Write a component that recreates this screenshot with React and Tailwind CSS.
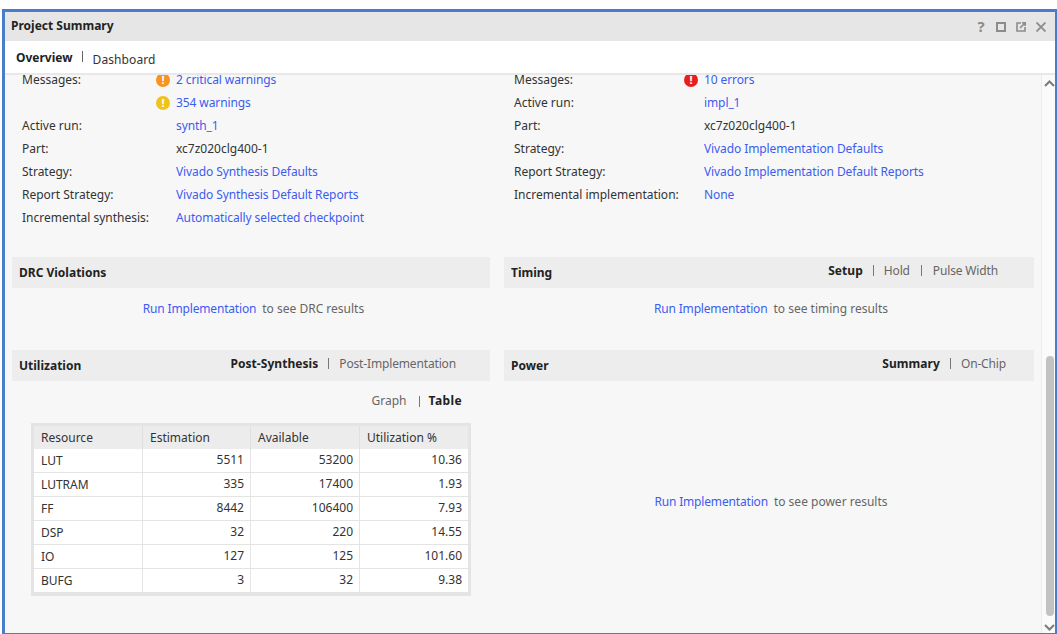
const leftRows = [
  { label: 'Messages:', value: '2 critical warnings', icon: 'orange', link: true },
  { label: '', value: '354 warnings', icon: 'yellow', link: true },
  { label: 'Active run:', value: 'synth_1', link: true },
  { label: 'Part:', value: 'xc7z020clg400-1' },
  { label: 'Strategy:', value: 'Vivado Synthesis Defaults', link: true },
  { label: 'Report Strategy:', value: 'Vivado Synthesis Default Reports', link: true },
  { label: 'Incremental synthesis:', value: 'Automatically selected checkpoint', link: true },
];

const rightRows = [
  { label: 'Messages:', value: '10 errors', icon: 'red', link: true },
  { label: 'Active run:', value: 'impl_1', link: true },
  { label: 'Part:', value: 'xc7z020clg400-1' },
  { label: 'Strategy:', value: 'Vivado Implementation Defaults', link: true },
  { label: 'Report Strategy:', value: 'Vivado Implementation Default Reports', link: true },
  { label: 'Incremental implementation:', value: 'None', link: true },
];

const resources = [
  ['LUT', '5511', '53200', '10.36'],
  ['LUTRAM', '335', '17400', '1.93'],
  ['FF', '8442', '106400', '7.93'],
  ['DSP', '32', '220', '14.55'],
  ['IO', '127', '125', '101.60'],
  ['BUFG', '3', '32', '9.38'],
];

function Badge({ color }) {
  const bg = color === 'orange' ? 'bg-[#f7931e]' : color === 'yellow' ? 'bg-[#eec41a]' : 'bg-[#e8201c]';
  return (
    <span className={`flex h-[14px] w-[14px] items-center justify-center rounded-full text-[11px] leading-none font-bold text-white ${bg}`}>
      !
    </span>
  );
}

function InfoRows({ rows, labelWidth }) {
  return (
    <div className="pl-[10px]">
      {rows.map((row, i) => (
        <div key={i} className="flex h-[23px] items-center">
          <span className={`shrink-0 whitespace-nowrap text-[#333] ${labelWidth}`}>{row.label}</span>
          <span className="flex w-[20px] shrink-0">{row.icon && <Badge color={row.icon} />}</span>
          <span className={`whitespace-nowrap ${row.link ? 'tracking-[-0.1px] text-[#3c5cf0]' : 'text-[#333]'}`}>{row.value}</span>
        </div>
      ))}
    </div>
  );
}

function SectionBar({ title, tabs, pad }) {
  return (
    <div className="flex h-[31px] items-center justify-between bg-[#ededed] pl-[7px]">
      <span className="mt-[1px] font-bold text-[#222]">{title}</span>
      {tabs && (
        <div className={`mb-[4px] flex items-center ${pad}`}>
          {tabs.map((t, i) => (
            <span key={t} className="flex items-center">
              {i > 0 && <span className={`h-[11px] w-px bg-[#777] ${i === 1 ? 'mx-[10px]' : 'mx-[11px]'}`} />}
              <span className={i === 0 ? 'tracking-[0.05px] font-bold text-[#222]' : 'tracking-[-0.15px] text-[#666]'}>{t}</span>
            </span>
          ))}
        </div>
      )}
    </div>
  );
}

function RunHint({ what }) {
  return (
    <>
      <span className="tracking-[-0.17px] text-[#3c5cf0]">Run Implementation</span>
      <span className="ml-[6px] text-[#666]">to see {what} results</span>
    </>
  );
}

function ResourceTable() {
  return (
    <div className="ml-[19px] mt-[13px] w-[440px] border-x-[3px] border-b-[4px] border-t-[3px] border-[#e4e4e4] bg-white">
      <div className="grid h-[23px] grid-cols-[108px_108px_109px_109px] items-center bg-[#ececec] text-[#333]">
        {['Resource', 'Estimation', 'Available', 'Utilization %'].map((h) => (
          <span key={h} className="flex h-full items-center border-l border-[#e0e0e0] pl-[7px] first:border-l-0">{h}</span>
        ))}
      </div>
      {resources.map((r, i) => (
        <div key={r[0]} className={`grid grid-cols-[108px_108px_109px_109px] text-[#333] ${i > 0 ? 'h-[24px] border-t border-[#e4e4e4]' : 'h-[23px]'}`}>
          <span className="flex items-center pl-[7px]">{r[0]}</span>
          {r.slice(1).map((v, j) => (
            <span key={j} className="flex items-center justify-end border-l border-[#e4e4e4] pb-[1px] pr-[6px]">{v}</span>
          ))}
        </div>
      ))}
    </div>
  );
}

export default function App() {
  return (
    <div className="h-[634px] w-[1057px] overflow-hidden bg-white pl-[2px] pt-[9px] font-['Noto_Sans',sans-serif] text-[12px]">
      <div className="flex h-[625px] flex-col border-b border-l-[3px] border-r-2 border-t-[3px] border-[#4a7ccb]">
        {/* Title bar */}
        <div className="flex h-[29px] shrink-0 items-center justify-between bg-[#e6e6e6] pl-[6px] pr-[9px]">
          <span className="mb-[2px] font-bold text-[#222]">Project Summary</span>
          <div className="flex items-center gap-[10px]">
            <span className="w-[10px] text-center text-[15px] leading-none font-bold text-[#8c8c8c]">?</span>
            <svg width="10" height="10" viewBox="0 0 10 10" fill="none" stroke="#8c8c8c" strokeWidth="2"><rect x="1" y="1" width="8" height="8" /></svg>
            <svg width="10" height="10" viewBox="0 0 10 10" fill="none" stroke="#8c8c8c" strokeWidth="1.6"><path d="M5 1H1v8h8V5" /><path d="M4 6l5-5M6 .8h3.2V4" /></svg>
            <svg width="10" height="10" viewBox="0 0 10 10" fill="none" stroke="#8c8c8c" strokeWidth="1.8"><path d="M.5.5l9 9M9.5.5l-9 9" /></svg>
          </div>
        </div>

        {/* Tabs */}
        <div className="flex h-[34px] shrink-0 items-center border-b-2 border-[#e8e8e8] bg-white pl-[11px]">
          <span className="mt-[2px] font-bold text-[#222]">Overview</span>
          <span className="mx-[9px] mt-[-1px] h-[11px] w-px bg-[#666]" />
          <span className="ml-[1px] mt-[5px] tracking-[0.1px] text-[#333]">Dashboard</span>
        </div>

        {/* Content */}
        <div className="flex min-h-0 flex-1">
          <div className="flex-1 overflow-hidden bg-[#f7f7f7] px-[7px]">
            <div className="-mt-[7px] grid grid-cols-[478px_530px] gap-x-[14px]">
              <div className="flex flex-col">
                <InfoRows rows={leftRows} labelWidth="w-[134px]" />
                <div className="mt-[28px]"><SectionBar title="DRC Violations" /></div>
                <div className="flex h-[62px] items-start justify-center pl-[5px] pt-[12px]"><RunHint what="DRC" /></div>
                <SectionBar title="Utilization" tabs={['Post-Synthesis', 'Post-Implementation']} pad="pr-[34px]" />
                <div className="mt-[11px] flex items-center justify-end pr-[28px]">
                  <span className="text-[#666]">Graph</span>
                  <span className="ml-[12px] mr-[9px] h-[11px] w-px bg-[#777]" />
                  <span className="tracking-[0.4px] font-bold text-[#222]">Table</span>
                </div>
                <ResourceTable />
              </div>
              <div className="flex flex-col">
                <InfoRows rows={rightRows} labelWidth="w-[170px]" />
                <div className="mt-[51px]"><SectionBar title="Timing" tabs={['Setup', 'Hold', 'Pulse Width']} pad="pr-[36px]" /></div>
                <div className="flex h-[62px] items-start justify-center pl-[4px] pt-[12px]"><RunHint what="timing" /></div>
                <SectionBar title="Power" tabs={['Summary', 'On-Chip']} pad="pr-[28px]" />
                <div className="flex h-[241px] items-center justify-center pl-[4px]"><div className="mt-[1px]"><RunHint what="power" /></div></div>
              </div>
            </div>
          </div>

          {/* Scrollbar */}
          <div className="flex w-[14px] shrink-0 flex-col items-center border-l border-[#ececec] bg-[#fafafa] pl-[2px]">
            <svg className="mt-[5px]" width="11" height="7" viewBox="0 0 11 7" fill="none" stroke="#7a7a7a" strokeWidth="2"><path d="M1 6l4.5-4.5L10 6" /></svg>
            <div className="mt-[269px] h-[260px] w-[8px] rounded-full bg-[#c2c2c2]" />
            <svg className="mt-[8px]" width="11" height="7" viewBox="0 0 11 7" fill="none" stroke="#7a7a7a" strokeWidth="2"><path d="M1 1l4.5 4.5L10 1" /></svg>
          </div>
        </div>
      </div>
    </div>
  );
}
